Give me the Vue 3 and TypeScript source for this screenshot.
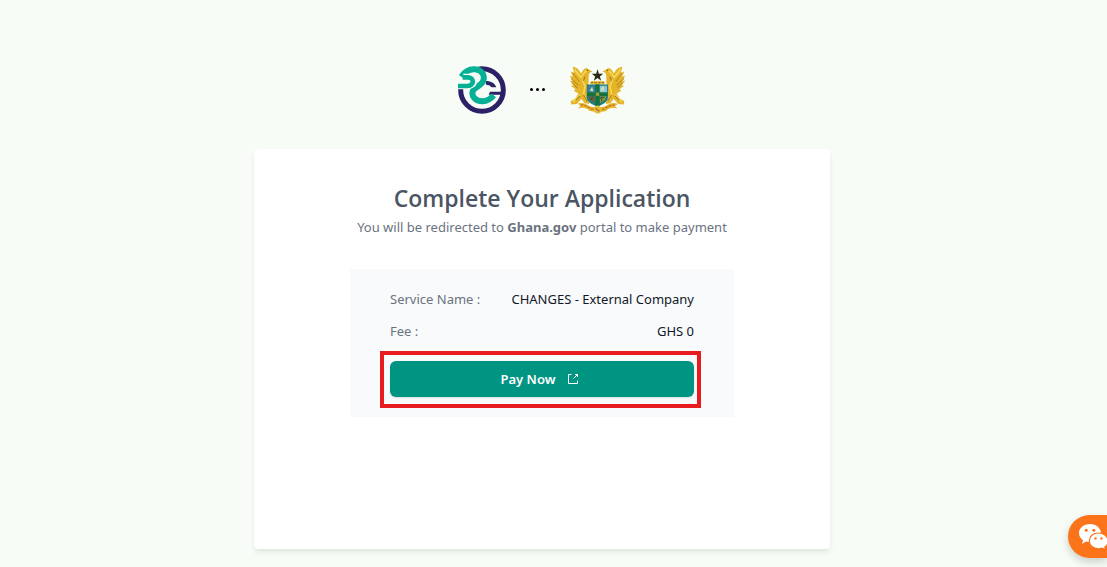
<script setup lang="ts">
interface Detail {
  label: string
  value: string
}

const details: Detail[] = [
  { label: 'Service Name :', value: 'CHANGES - External Company' },
  { label: 'Fee :', value: 'GHS 0' },
]
</script>

<template>
  <main class="page">
    <header class="brands">
      <svg class="logo" viewBox="24 24 144 144" role="img" aria-label="Registrar logo">
        <circle cx="96" cy="96" r="64" fill="none" stroke="#2b2166" stroke-width="15" />
        <path d="M20 20H82L96 42L60 60L40 93H20Z" fill="#f7fcf7" />
        <path d="M108 69C124 69 135 76 139 88H125C120 82 115 80 108 80Z" fill="#2b2166" />
        <path d="M120 101H160V110H116Z" fill="#2b2166" />
        <path d="M34 56C46 39 60 33 74 34C97 36 105 52 100 68C96 82 78 85 69 97C62 114 77 130 97 130C112 129 122 123 131 112" fill="none" stroke="#06b095" stroke-width="18" />
        <path d="M40 57H53C78 58 77 84 53 84H24" fill="none" stroke="#f7fcf7" stroke-width="19" />
        <path d="M38 58H53C74 58 73 84 53 84H24" fill="none" stroke="#06b095" stroke-width="14" />
      </svg>
      <span class="dots" aria-hidden="true"><i></i><i></i><i></i></span>
      <svg class="crest" viewBox="24 20 166 146" role="img" aria-label="Coat of arms of Ghana">
        <g id="eagle">
          <path d="M33 25C44 26 53 34 58 45L65 34C70 28 77 28 82 34L92 39L84 43C78 51 82 62 80 75L79 118L83 136L69 134L59 121L45 136L29 138L27 128L41 120L50 105L36 97L42 92L27 82L37 80L24 67L35 67L24 52L34 54L27 39L37 43Z" fill="#e4b42a" />
          <path d="M33 44L53 70M28 60L50 81M31 73L48 89" fill="none" stroke="#be8b1c" stroke-width="3" />
          <path d="M38 33L57 57L67 44L74 37M62 63L70 84L65 106L74 125M55 108L35 130" fill="none" stroke="#f8d755" stroke-width="5" />
          <path d="M70 55L65 67M65 109L76 127M42 125L55 112" fill="none" stroke="#a87820" stroke-width="3" />
          <circle cx="77" cy="36" r="2" fill="#574415" />
        </g>
        <use href="#eagle" transform="matrix(-1 0 0 1 214 0)" />
        <path d="M94 30H120V68H94Z" fill="#f7fcf7" />
        <path d="M88 68H126L130 78H84Z" fill="#e8c53b" />
        <path d="M87 73H128" stroke="#974c28" stroke-width="3" stroke-dasharray="7 4" />
        <path d="M107 33L111 46H124L114 54L118 67L107 59L96 67L100 54L90 46H103Z" fill="#292c13" />
        <path d="M75 78H138V116C138 130 122 138 107 144C91 138 75 130 75 116Z" fill="#247c83" />
        <path d="M78 82H99V103H78Z" fill="#36829e" />
        <path d="M113 82H135V102H113Z" fill="#8cc9d9" />
        <path d="M84 97L91 84L95 99M117 97V89H121V84H126V97Z" fill="#d6deb0" />
        <path d="M80 113H99V132C89 128 81 122 80 113Z" fill="#66643b" />
        <path d="M114 113H133C132 123 125 127 114 132Z" fill="#8d9a3f" />
        <path d="M86 124L94 115M119 127V114M114 119L128 116" stroke="#2d542a" stroke-width="3" />
        <path d="M101 77H113V102H137V112H113V141L107 144L101 141V112H76V102H101Z" fill="#17713b" />
        <path d="M102 102H112V112H102Z" fill="#a99938" />
        <path d="M48 135C61 130 75 136 85 144L107 148L130 143C140 134 154 130 168 136L159 142L166 149C149 145 141 148 131 158L107 161L84 157C74 147 62 145 49 150L56 142Z" fill="#e9b529" />
        <path d="M57 139C70 138 79 146 89 151L107 154L126 151C137 145 146 138 160 139" fill="none" stroke="#a8602a" stroke-width="3" stroke-dasharray="8 3" />
        <path d="M95 146L107 140L119 147L116 162L107 165L98 161Z" fill="#e5bb3a" />
        <path d="M101 149L113 158" stroke="#9e5a24" stroke-width="3" />
      </svg>
    </header>

    <section class="card">
      <h1>Complete Your Application</h1>
      <p class="subtitle">You will be redirected to <strong>Ghana.gov</strong> portal to make payment</p>
      <div class="summary">
        <dl>
          <div v-for="detail in details" :key="detail.label" class="detail">
            <dt>{{ detail.label }}</dt>
            <dd>{{ detail.value }}</dd>
          </div>
        </dl>
        <div class="action">
          <button type="button" class="pay">
            <span>Pay Now</span>
            <svg viewBox="0 0 12 12" aria-hidden="true">
              <path d="M4.5 1.5H1.5V10.5H10.5V7.5M8 1.5H10.5V4M10.5 1.5L6.5 5.5" />
            </svg>
          </button>
          <span class="highlight" aria-hidden="true"></span>
        </div>
      </div>
    </section>

    <button type="button" class="chat" aria-label="Open chat">
      <svg viewBox="0 0 30 24" aria-hidden="true">
        <path d="M11 -1C4.8 -1 0 3 0 8.1C0 11.2 1.5 13.6 4 15.2L3 19L7 16.6L11 17.2C17.2 17.2 22 13.3 22 8.3S17.2 -1 11 -1Z" fill="#fff" />
        <path d="M19.5 8C14.2 8 10.3 11.5 10.3 15.9S14.2 23.8 19.5 23.8L23.2 23.2L26.7 25L25.8 22C28 20.5 29 18.5 29 16C29 11.5 24.8 8 19.5 8Z" fill="#fff" stroke="#fb7419" stroke-width="1.2" />
        <g fill="#fb7419">
          <circle cx="7.2" cy="5.3" r="1.5" /><circle cx="14.8" cy="5.3" r="1.5" />
          <circle cx="16.5" cy="13.4" r="1.2" /><circle cx="22.5" cy="13.4" r="1.2" />
        </g>
      </svg>
    </button>
  </main>
</template>

<style>
body {
  margin: 0;
  background: #f7fcf7;
}
</style>

<style scoped>
.page {
  box-sizing: border-box;
  min-height: 100vh;
  padding: 65px 23px 18px 0;
  overflow: hidden;
  background: #f7fcf7;
  color: #111827;
  font-family: "Segoe UI", "Noto Sans", "Open Sans", sans-serif;
  font-size: 13px;
  line-height: 20px;
}
.brands {
  display: flex;
  align-items: center;
  justify-content: center;
  gap: 24px;
  margin-bottom: 35px;
}
.logo { width: 48px; height: 48px; }
.crest { width: 57px; height: 49px; }
.dots { display: flex; gap: 3px; }
.dots i { width: 3px; height: 3px; border-radius: 50%; background: #000; }
.card {
  box-sizing: border-box;
  max-width: 576px;
  min-height: 400px;
  margin: 0 auto;
  padding: 32px 24px;
  border-radius: 4px;
  background: #fff;
  box-shadow: 0 4px 6px -1px rgb(0 0 0 / 8%), 0 2px 4px -1px rgb(0 0 0 / 4%);
  text-align: center;
}
h1 {
  margin: 0 0 2px;
  color: #4b5563;
  font-family: "Segoe UI", "Open Sans", "Noto Sans", sans-serif;
  font-size: 23px;
  font-weight: 600;
  line-height: 34px;
}
.subtitle { margin: 0 0 32px; color: #6b7280; }
.subtitle strong { font-weight: 700; }
.summary {
  box-sizing: border-box;
  max-width: 384px;
  margin: 0 auto;
  padding: 20px 40px;
  background: #f9fafc;
}
dl { display: grid; gap: 12px; margin: 0 0 20px; }
.detail { display: flex; justify-content: space-between; }
dt { color: #6b7280; }
dd { margin: 0; }
.action { position: relative; }
.pay {
  display: flex;
  align-items: center;
  justify-content: center;
  gap: 12px;
  width: 100%;
  height: 36px;
  padding: 0 20px 0 16px;
  border: 0;
  border-radius: 6px;
  background: #009482;
  box-shadow: 0 1px 2px rgb(0 0 0 / 12%);
  color: #fff;
  font: inherit;
  font-weight: 600;
  cursor: pointer;
}
.pay svg { width: 12px; height: 12px; fill: none; stroke: #fff; stroke-width: 1; }
.highlight {
  position: absolute;
  inset: -10px -7px -11px -10px;
  border: 4px solid #e81b1f;
  pointer-events: none;
}
.chat {
  position: fixed;
  right: 0;
  bottom: 9px;
  width: 39px;
  height: 43px;
  padding: 0 0 0 11px;
  overflow: hidden;
  border: 0;
  border-radius: 22px 0 0 22px;
  background: #fb7419;
  box-shadow: 0 4px 8px rgb(0 0 0 / 18%);
  cursor: pointer;
}
.chat svg { display: block; width: 30px; height: 24px; overflow: visible; }
</style>
